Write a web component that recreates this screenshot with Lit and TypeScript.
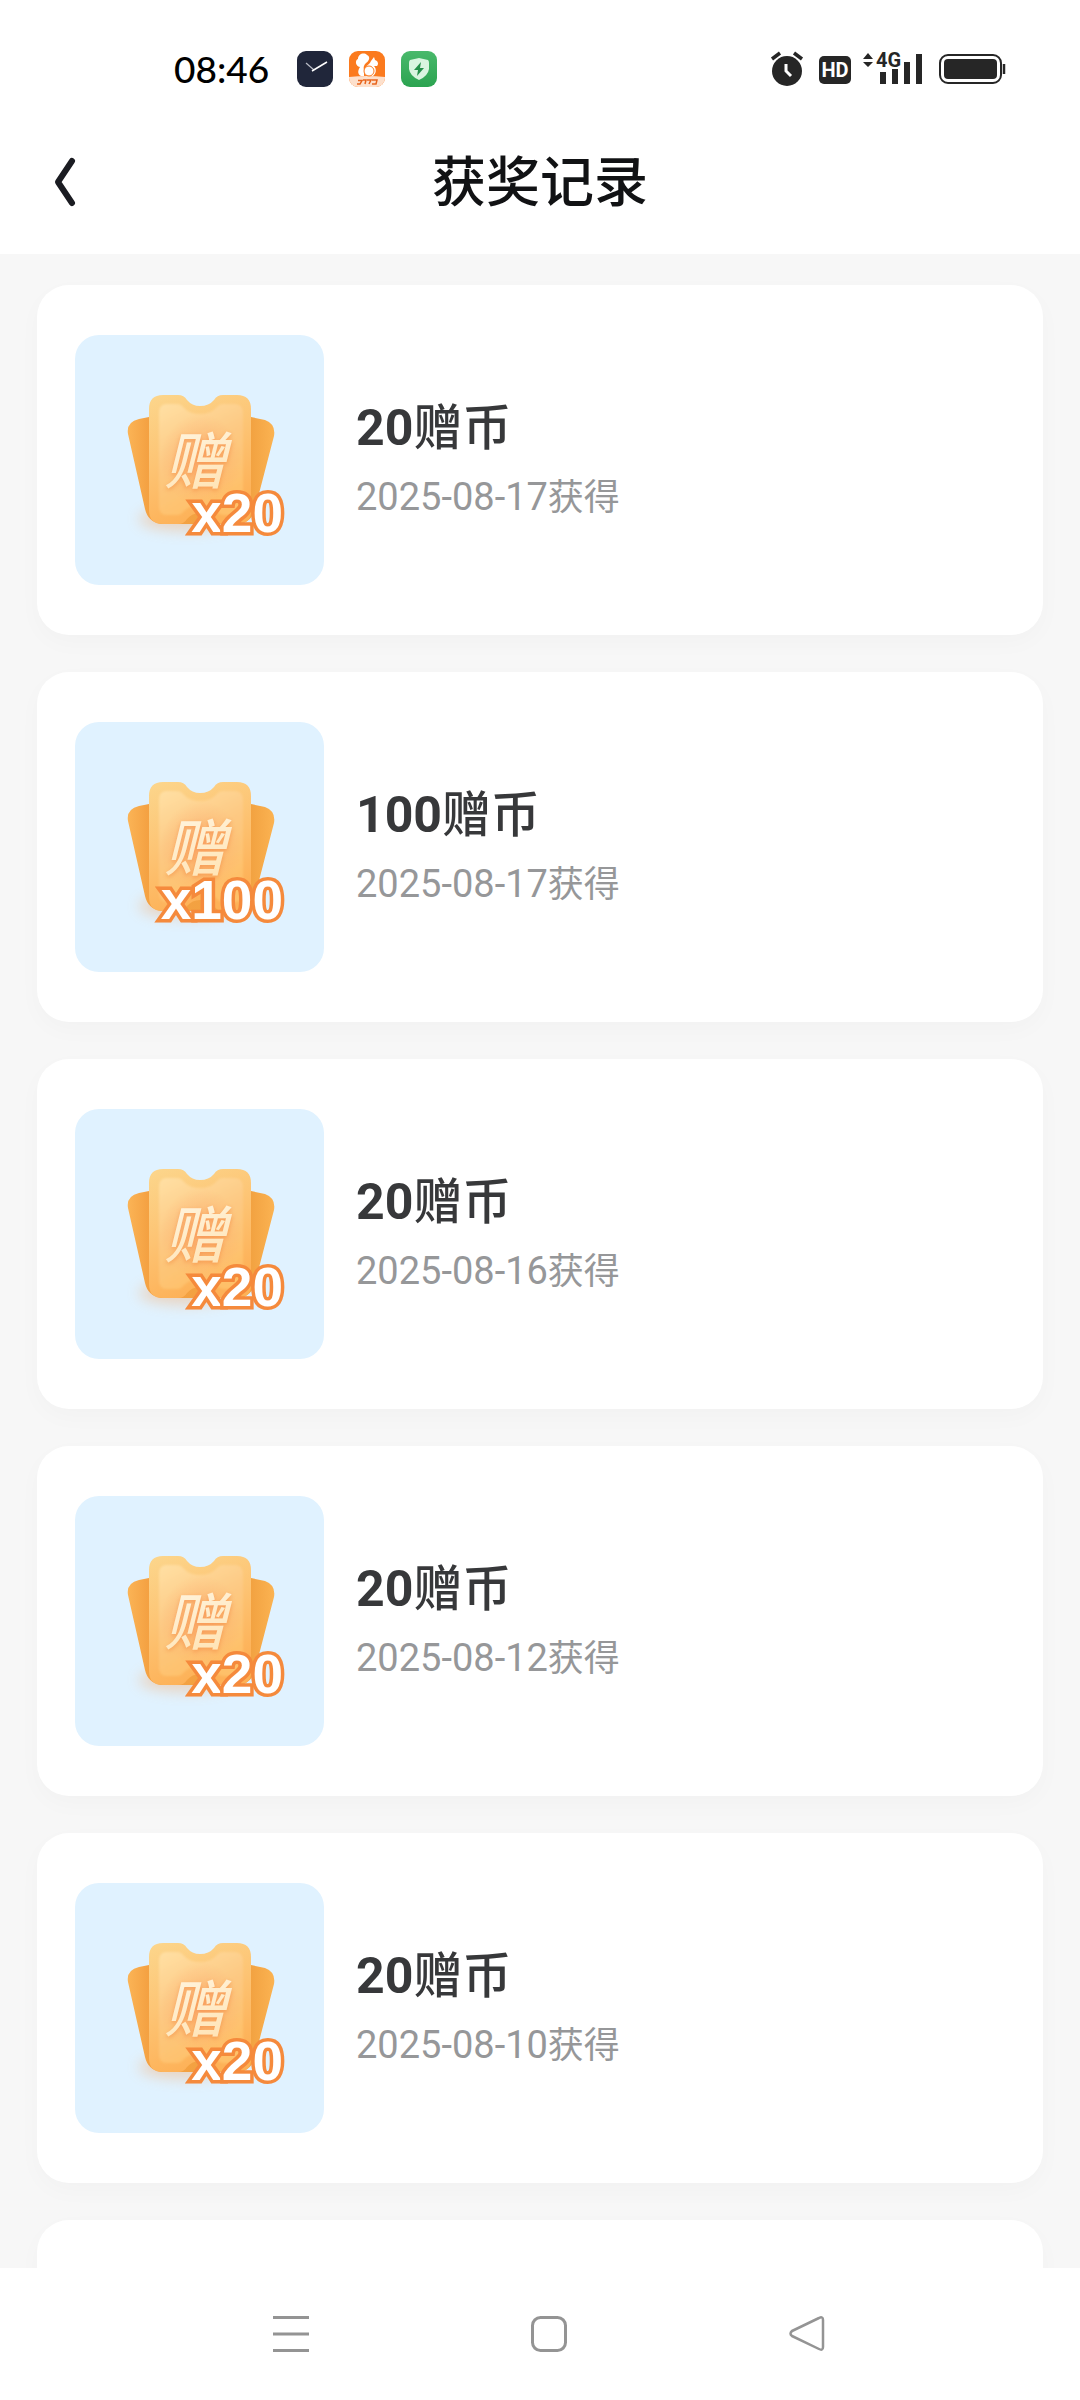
import { LitElement, html, css } from "lit";
import { customElement, property } from "lit/decorators.js";

interface PrizeRecord {
  amount: number;
  date: string;
}

const RECORDS: PrizeRecord[] = [
  { amount: 20, date: "2025-08-17" },
  { amount: 100, date: "2025-08-17" },
  { amount: 20, date: "2025-08-16" },
  { amount: 20, date: "2025-08-12" },
  { amount: 20, date: "2025-08-10" },
];

/** Ticket artwork with the coin count printed over its lower corner. */
@customElement("gift-ticket")
export class GiftTicket extends LitElement {
  @property({ type: Number }) amount = 0;

  static styles = css`
    :host {
      display: block;
      flex: none;
      width: 249px;
      height: 250px;
      border-radius: 24px;
      background: #e0f2ff;
      overflow: hidden;
    }
    svg {
      display: block;
    }
    .glyph {
      font: italic 500 62px "Noto Sans CJK SC", sans-serif;
      filter: drop-shadow(0 2px 2px rgba(240, 120, 50, 0.45));
    }
    .count {
      font: 700 55px "Liberation Sans", Arial, sans-serif;
      fill: #fff;
      stroke: #f58a3c;
      stroke-width: 7px;
      paint-order: stroke;
      text-anchor: end;
    }
  `;

  render() {
    return html`
      <svg width="250" height="250" viewBox="0 0 250 250" aria-hidden="true">
        <defs>
          <linearGradient id="back" x1="0" y1="0" x2="1" y2="0">
            <stop offset="0" stop-color="#fbb456" />
            <stop offset="0.14" stop-color="#f4a142" />
            <stop offset="0.84" stop-color="#f2a241" />
            <stop offset="1" stop-color="#fbb352" />
          </linearGradient>
          <linearGradient id="front" x1="0" y1="0" x2="0.35" y2="1">
            <stop offset="0" stop-color="#fcd68c" />
            <stop offset="0.5" stop-color="#fdc474" />
            <stop offset="1" stop-color="#fdb157" />
          </linearGradient>
          <linearGradient id="panel" x1="0" y1="0" x2="0.4" y2="1">
            <stop offset="0" stop-color="#ffe0a4" />
            <stop offset="0.5" stop-color="#fdc983" />
            <stop offset="1" stop-color="#fec069" />
          </linearGradient>
          <radialGradient id="glow" cx="0.5" cy="0.5" r="0.5">
            <stop offset="0" stop-color="#fca468" stop-opacity="0.65" />
            <stop offset="1" stop-color="#fca468" stop-opacity="0" />
          </radialGradient>
          <linearGradient id="ink" x1="0" y1="0" x2="0.3" y2="1">
            <stop offset="0" stop-color="#fff8e8" />
            <stop offset="1" stop-color="#ffe4b6" />
          </linearGradient>
          <filter id="soft" x="-30%" y="-80%" width="160%" height="260%">
            <feGaussianBlur stdDeviation="7" />
          </filter>
          <filter id="edge" x="-10%" y="-10%" width="120%" height="120%">
            <feGaussianBlur stdDeviation="1" />
          </filter>
        </defs>
        <ellipse cx="112" cy="184" rx="48" ry="12" fill="#f7a765" opacity="0.4" filter="url(#soft)" />
        <path
          d="M74 82L64 84Q51 87 53 99L70 174Q73 187 86 189H164Q177 187 180 174L199 101Q201 89 190 85L176 82Z"
          fill="url(#back)"
        />
        <path
          d="M88 60H103Q109 60 112 65Q117 71 125 71Q134 71 139 65Q142 60 148 60H162Q176 60 176 74V176Q176 189 162 189H148Q142 189 139 184Q134 178 125 178Q117 178 112 184Q109 189 103 189H88Q74 189 74 175V74Q74 60 88 60Z"
          fill="url(#front)"
        />
        <path
          d="M92 69H102Q106 69 109 73Q115 79 125 79Q135 79 141 73Q144 69 149 69H159Q168 69 168 78V171Q168 180 159 180H149Q144 180 141 176Q135 170 125 170Q115 170 109 176Q106 180 102 180H92Q84 180 84 171V78Q84 69 92 69Z"
          fill="url(#panel)"
          filter="url(#edge)"
        />
        <ellipse cx="126" cy="125" rx="41" ry="46" fill="url(#glow)" />
        <text class="glyph" x="89" y="149" fill="url(#ink)">赠</text>
        <text class="count" x="208" y="197">x${this.amount}</text>
      </svg>
    `;
  }
}

@customElement("prize-card")
export class PrizeCard extends LitElement {
  @property({ attribute: false }) record?: PrizeRecord;

  static styles = css`
    :host {
      display: flex;
      align-items: center;
      gap: 32px;
      box-sizing: border-box;
      min-height: 350px;
      padding: 50px 38px;
      border-radius: 32px;
      background: #fff;
      box-shadow: 0 8px 24px rgba(0, 0, 0, 0.025);
    }
    .text {
      padding-top: 4px;
    }
    .name {
      margin: 0;
      color: #37383a;
      font-size: 50px;
      font-weight: 700;
      line-height: 70px;
    }
    .unit {
      font-size: 49px;
      font-weight: 500;
    }
    .date {
      margin: 0;
      color: #969799;
      font-size: 38px;
      line-height: 66px;
    }
    .note {
      font-size: 36px;
    }
  `;

  render() {
    if (!this.record) return null;
    const { amount, date } = this.record;
    return html`
      <gift-ticket .amount=${amount}></gift-ticket>
      <div class="text">
        <h2 class="name">${amount}<span class="unit">赠币</span></h2>
        <p class="date">${date}<span class="note">获得</span></p>
      </div>
    `;
  }
}

@customElement("status-bar")
export class StatusBar extends LitElement {
  static styles = css`
    :host {
      display: flex;
      justify-content: space-between;
      align-items: center;
      box-sizing: border-box;
      height: 110px;
      padding: 28px 73px 0 174px;
      color: #000;
    }
    .left,
    .right {
      display: flex;
      align-items: center;
    }
    .left {
      gap: 16px;
    }
    .right {
      gap: 12px;
    }
    .time {
      margin-right: 12px;
      font: 500 37px/44px Lato, sans-serif;
    }
    svg {
      display: block;
      overflow: visible;
    }
    .tag {
      font: 700 20px Roboto, sans-serif;
    }
  `;

  render() {
    return html`
      <div class="left">
        <time class="time">08:46</time>
        <svg width="36" height="36" viewBox="0 0 36 36" aria-hidden="true">
          <rect width="36" height="36" rx="9" fill="#20263a" />
          <path d="M9 12L17 19" stroke="#b9bcc6" stroke-width="1.2" fill="none" />
          <path d="M15 20L30 11" stroke="#fff" stroke-width="1.5" fill="none" />
        </svg>
        <svg width="36" height="36" viewBox="0 0 36 36" aria-hidden="true">
          <defs>
            <clipPath id="app"><rect width="36" height="36" rx="9" /></clipPath>
          </defs>
          <g clip-path="url(#app)">
            <rect width="36" height="36" fill="#fb7a1e" />
            <path d="M0 26Q18 24 36 26V36H0Z" fill="#fde0cc" />
            <path
              d="M15 25H12C8 23 9 19 11 16C6 15 6 9 9 8C9 3 15 1 18 4C22 6 20 10 17 12C15 14 14 16 15 19Z"
              fill="#fff"
            />
            <path d="M16 17C18 14 21 13 22 10L25 6L26 9C29 10 30 13 28 15H25C28 18 27 23 24 25L16 24Z" fill="#fff" />
            <circle cx="20" cy="20" r="5" fill="#fff" stroke="#fb7a1e" stroke-width="1" />
            <path
              d="M9 29.500H13L11 33H8M14 29H17L16 33M18 29H22L20 33M23 29H28L27 33H23"
              stroke="#e8641c"
              stroke-width="1.500"
              fill="none"
            />
          </g>
        </svg>
        <svg width="36" height="36" viewBox="0 0 36 36" aria-hidden="true">
          <defs>
            <linearGradient id="green" x1="0" y1="0" x2="0" y2="1">
              <stop offset="0" stop-color="#49b96b" />
              <stop offset="1" stop-color="#2ba350" />
            </linearGradient>
          </defs>
          <rect width="36" height="36" rx="9" fill="url(#green)" />
          <path d="M18 7L27 9Q28 10 28 12V18Q27 25 18 29Q9 25 8 18V12Q8 10 9 9Z" fill="#d9f5e0" />
          <path d="M20 11L13 19H17L16 25L23 17H19Z" fill="#25904a" />
        </svg>
      </div>
      <div class="right">
        <svg width="36" height="36" viewBox="0 0 36 36" aria-hidden="true">
          <circle cx="16" cy="20" r="15" fill="#262626" />
          <path d="M1 8L9 2M31 8L23 2" stroke="#262626" stroke-width="3.500" fill="none" />
          <path d="M15 13V20L20 25" stroke="#fff" stroke-width="3" fill="none" />
        </svg>
        <svg width="32" height="36" viewBox="0 0 32 36" aria-hidden="true">
          <rect y="5" width="32" height="28" rx="5" fill="#262626" />
          <text class="tag" x="16" y="26" fill="#fff" text-anchor="middle">HD</text>
        </svg>
        <svg width="64" height="36" viewBox="0 0 64 36" aria-hidden="true">
          <path d="M0 8L5 2L10 8ZM0 11H10L5 16Z" fill="#262626" />
          <text class="tag" x="13" y="16" fill="#262626">4G</text>
          <path d="M17 21H23V33H17ZM29 18H35V33H29ZM41 11H47V33H41ZM53 3H59V33H53Z" fill="#262626" />
        </svg>
        <svg width="68" height="36" viewBox="0 0 68 36" aria-hidden="true">
          <rect x="1" y="4" width="61" height="28" rx="8" fill="none" stroke="#262626" stroke-width="2" />
          <rect x="5" y="8" width="53" height="20" rx="4" fill="#262626" />
          <path d="M65 13V23" stroke="#262626" stroke-width="2.500" />
        </svg>
      </div>
    `;
  }
}

@customElement("app-root")
export class AppRoot extends LitElement {
  static styles = css`
    :host {
      display: flex;
      flex-direction: column;
      height: 100vh;
      background: #fff;
      font-family: Roboto, "Noto Sans CJK SC", sans-serif;
    }
    .bar {
      display: grid;
      grid-template-columns: 84px 1fr 84px;
      align-items: center;
      flex: none;
      height: 144px;
    }
    .title {
      grid-column: 2;
      margin: 0;
      padding-top: 4px;
      color: #111214;
      font-size: 54px;
      font-weight: 500;
      line-height: 80px;
      text-align: center;
    }
    status-bar {
      flex: none;
    }
    button {
      display: flex;
      align-items: center;
      justify-content: center;
      margin: 0;
      padding: 0;
      border: 0;
      background: none;
      cursor: pointer;
    }
    .back {
      height: 80px;
      padding-left: 44px;
    }
    .scroll {
      flex: 1;
      min-height: 0;
      overflow: hidden;
      background: #f7f7f7;
    }
    .list {
      display: flex;
      flex-direction: column;
      gap: 37px;
      margin: 0;
      padding: 31px 37px;
      list-style: none;
    }
    .nav {
      display: flex;
      flex: none;
      height: 132px;
      padding: 0 144px 0 162px;
    }
    .nav button {
      flex: 1;
    }
  `;

  render() {
    return html`
      <status-bar></status-bar>
      <header class="bar">
        <button class="back" aria-label="返回">
          <svg width="40" height="52" viewBox="0 0 40 52" aria-hidden="true">
            <path
              d="M28 5L14 26L28 47"
              fill="none"
              stroke="#1b1c22"
              stroke-width="6"
              stroke-linecap="round"
              stroke-linejoin="round"
            />
          </svg>
        </button>
        <h1 class="title">获奖记录</h1>
      </header>
      <main class="scroll">
        <ul class="list">
          ${RECORDS.map((record) => html`<li><prize-card .record=${record}></prize-card></li>`)}
          <li aria-hidden="true"><prize-card></prize-card></li>
        </ul>
      </main>
      <nav class="nav">
        <button aria-label="菜单">
          <svg width="36" height="36" viewBox="0 0 36 36" aria-hidden="true">
            <path d="M0 1.500H36M0 18H36M0 34.500H36" stroke="#949494" stroke-width="3" />
          </svg>
        </button>
        <button aria-label="主页">
          <svg width="36" height="36" viewBox="0 0 36 36" aria-hidden="true">
            <rect x="1.500" y="1.500" width="33" height="33" rx="8" fill="none" stroke="#949494" stroke-width="3" />
          </svg>
        </button>
        <button aria-label="后退">
          <svg width="36" height="36" viewBox="0 0 36 36" aria-hidden="true">
            <path
              d="M30 2Q34 0 34 4V31Q34 35 30 33L3 20Q0 18 3 15Z"
              fill="none"
              stroke="#949494"
              stroke-width="2.500"
              stroke-linejoin="round"
            />
          </svg>
        </button>
      </nav>
    `;
  }
}
